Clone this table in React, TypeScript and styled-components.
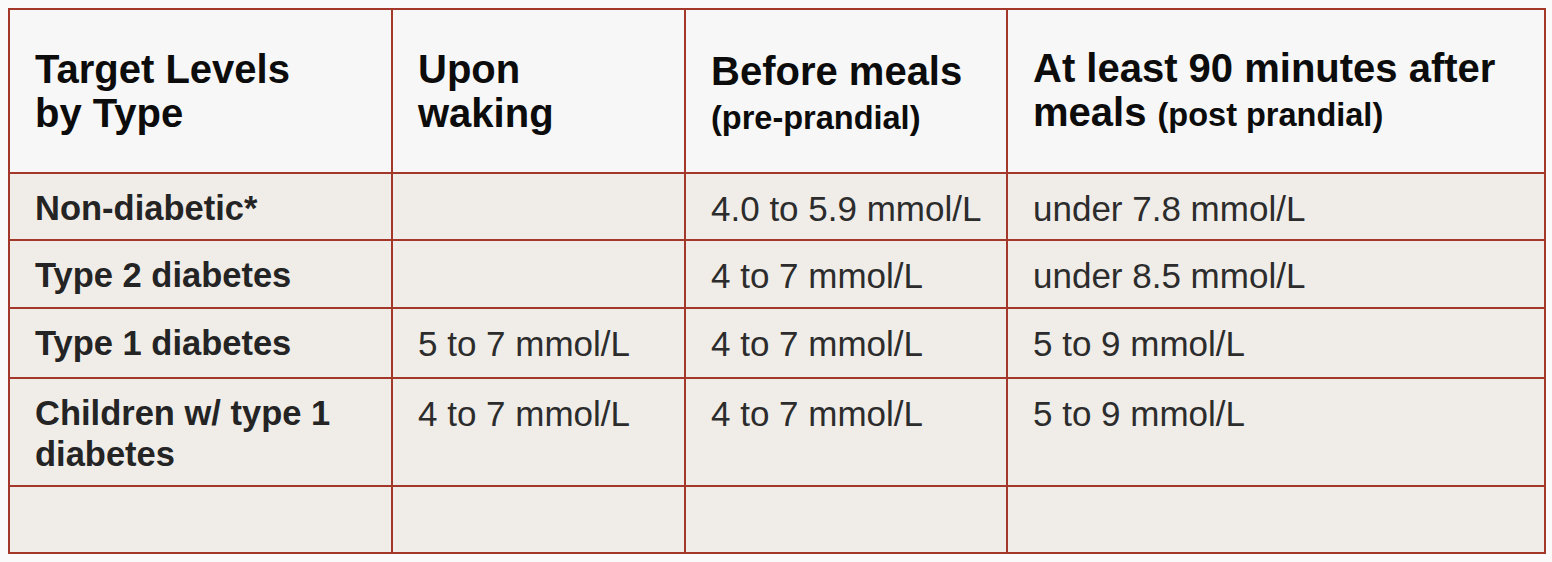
import styled, { createGlobalStyle } from "styled-components";

const GlobalStyle = createGlobalStyle`
    body {
        margin: 0;
        padding: 8px;
        background: #fafafa;
        font-family: "Liberation Sans", Arial, sans-serif;
    }
`;

type Row = {
    label: string[];
    waking: string;
    before: string;
    after: string;
    height: number;
};

const rows: Row[] = [
    { label: ["Non-diabetic*"], waking: "", before: "4.0 to 5.9 mmol/L", after: "under 7.8 mmol/L", height: 67 },
    { label: ["Type 2 diabetes"], waking: "", before: "4 to 7 mmol/L", after: "under 8.5 mmol/L", height: 68 },
    { label: ["Type 1 diabetes"], waking: "5 to 7 mmol/L", before: "4 to 7 mmol/L", after: "5 to 9 mmol/L", height: 70 },
    { label: ["Children w/ type 1", "diabetes"], waking: "4 to 7 mmol/L", before: "4 to 7 mmol/L", after: "5 to 9 mmol/L", height: 108 },
    { label: [], waking: "", before: "", after: "", height: 67 },
];

export default function App() {
    return (
        <>
            <GlobalStyle/>
            <Table>
                <colgroup>
                    <col style={{width: 383}}/>
                    <col style={{width: 293}}/>
                    <col style={{width: 322}}/>
                    <col style={{width: 538}}/>
                </colgroup>
                <thead>
                    <HeadRow>
                        <HeadCell>Target Levels<br/>by Type</HeadCell>
                        <HeadCell>Upon<br/>waking</HeadCell>
                        <HeadCell $drop={3}>Before meals<br/><Sub>(pre-prandial)</Sub></HeadCell>
                        <HeadCell>At least 90 minutes after<br/>meals <Sub>(post prandial)</Sub></HeadCell>
                    </HeadRow>
                </thead>
                <tbody>
                    {rows.map((row, i) => (
                        <BodyRow key={i} $height={row.height}>
                            <LabelCell>
                                {row.label.map((line, j) => (
                                    <span key={j}>{line}{j < row.label.length - 1 && <br/>}</span>
                                ))}
                            </LabelCell>
                            <ValueCell>{row.waking}</ValueCell>
                            <ValueCell>{row.before}</ValueCell>
                            <ValueCell>{row.after}</ValueCell>
                        </BodyRow>
                    ))}
                </tbody>
            </Table>
        </>
    );
}

const Table = styled.table`
    table-layout: fixed;
    width: 1538px;
    border-collapse: separate;
    border-spacing: 0;
    border-top: 2px solid #a3382a;
    border-left: 2px solid #a3382a;
`;

const HeadRow = styled.tr`
    height: 164px;
    background: #f7f7f7;
`;

const BodyRow = styled.tr<{ $height: number }>`
    height: ${({ $height }) => $height}px;
    background: #f0ede9;
`;

const Cell = styled.td`
    box-sizing: border-box;
    border-right: 2px solid #a3382a;
    border-bottom: 2px solid #a3382a;
    padding: 0 10px 0 25px;
`;

const HeadCell = styled(Cell).attrs({ as: "th" })<{ $drop?: number }>`
    vertical-align: middle;
    text-align: left;
    padding-top: ${({ $drop }) => ($drop ?? 0) * 2}px;
    font-size: 40px;
    line-height: 44px;
    font-weight: 700;
    color: #0c0c0c;
`;

const Sub = styled.span`
    font-size: 32.5px;
`;

const LabelCell = styled(Cell)`
    vertical-align: top;
    padding-top: 14px;
    font-size: 34.5px;
    line-height: 41px;
    font-weight: 700;
    color: #242424;
`;

const ValueCell = styled(Cell)`
    vertical-align: top;
    padding-top: 14px;
    font-size: 35px;
    line-height: 41px;
    color: #2c2c2c;
`;
